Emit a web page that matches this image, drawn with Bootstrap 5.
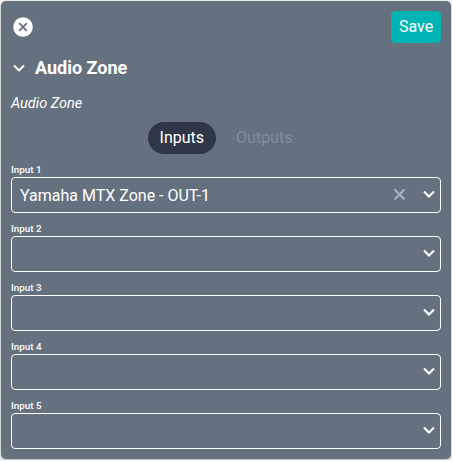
<!DOCTYPE html>
<html lang="en">
<head>
<meta charset="utf-8">
<title>Audio Zone</title>
<link href="https://cdn.jsdelivr.net/npm/bootstrap@5.3.0/dist/css/bootstrap.min.css" rel="stylesheet">
<style>
body{font-family:Roboto,sans-serif;font-size:16px;background:#f4f4f4;overflow:hidden}
.zone-panel{width:450px;height:458px;margin:1px;padding:10px;background:#66717f;border-radius:5px;box-shadow:0 1px 3px rgba(0,0,0,.3)}
.zone-panel svg{display:block;flex:none}
.top-bar{height:32px}
.close-btn{margin-left:2px}
.save-btn{--bs-btn-bg:#00b4b4;--bs-btn-border-color:#00b4b4;--bs-btn-color:#fff;width:50px;height:32px;border-radius:4px;line-height:30px}
.zone-title{height:50px;font-size:18px;font-weight:700;gap:9px;padding-left:1px}
.zone-desc{height:20px;line-height:22px;font-size:14.5px}
.zone-tabs{margin-top:9px;gap:8px}
.zone-tabs .nav-link{height:32px;padding:0 12px;line-height:31px;border-radius:16px;color:#838d99}
.zone-tabs .nav-link.active{background:#2f3746;color:#fff}
.input-label{height:23px;padding-top:10px;font-size:9.8px;line-height:11px;font-weight:500}
.select-box{height:36px;border:1px solid #fff;border-radius:4px;padding:0 5px 0 8px}
.select-value{padding-top:2px}
.clear-icon{margin-right:17px}
</style>
<script src="https://cdn.jsdelivr.net/npm/bootstrap@5.3.0/dist/js/bootstrap.bundle.min.js"></script>
</head>
<body>
<svg class="d-none"><symbol id="chev" viewBox="0 0 12 12"><path d="m1 2.5 5 5 5-5" fill="none" stroke="#fff" stroke-width="2.1"/></symbol></svg>
<main class="zone-panel text-white">
<div class="top-bar d-flex justify-content-between align-items-center">
<button class="close-btn btn border-0 p-0" aria-label="Close"><svg width="20" height="20" viewBox="0 0 20 20"><circle cx="10" cy="10" r="9.8" fill="#fff"/><path d="m6.2 6.2 7.6 7.6m0-7.6-7.6 7.6" stroke="#66717f" stroke-width="1.8"/></svg></button>
<button class="save-btn btn p-0">Save</button>
</div>
<h1 class="zone-title d-flex align-items-center m-0"><svg width="14" height="14" viewBox="0 0 14 14"><path d="m2 4.5 5 5 5-5" fill="none" stroke="#fff" stroke-width="1.9"/></svg>Audio Zone</h1>
<p class="zone-desc fst-italic m-0">Audio Zone</p>
<nav class="zone-tabs nav nav-pills justify-content-center">
<a class="nav-link active" href="#">Inputs</a><a class="nav-link" href="#">Outputs</a>
</nav>
<div class="input-label">Input 1</div>
<div class="select-box d-flex align-items-center"><span class="select-value me-auto">Yamaha MTX Zone - OUT-1</span><svg class="clear-icon" width="12" height="12" viewBox="0 0 12 12"><path d="m.5.5 10 10m0-10-10 10" stroke="#a9b1bf" stroke-width="2.2"/></svg><svg width="12" height="12"><use href="#chev"/></svg></div>
<div class="input-label">Input 2</div>
<div class="select-box d-flex align-items-center justify-content-end"><svg width="12" height="12"><use href="#chev"/></svg></div>
<div class="input-label">Input 3</div>
<div class="select-box d-flex align-items-center justify-content-end"><svg width="12" height="12"><use href="#chev"/></svg></div>
<div class="input-label">Input 4</div>
<div class="select-box d-flex align-items-center justify-content-end"><svg width="12" height="12"><use href="#chev"/></svg></div>
<div class="input-label">Input 5</div>
<div class="select-box d-flex align-items-center justify-content-end"><svg width="12" height="12"><use href="#chev"/></svg></div>
</main>
</body>
</html>
